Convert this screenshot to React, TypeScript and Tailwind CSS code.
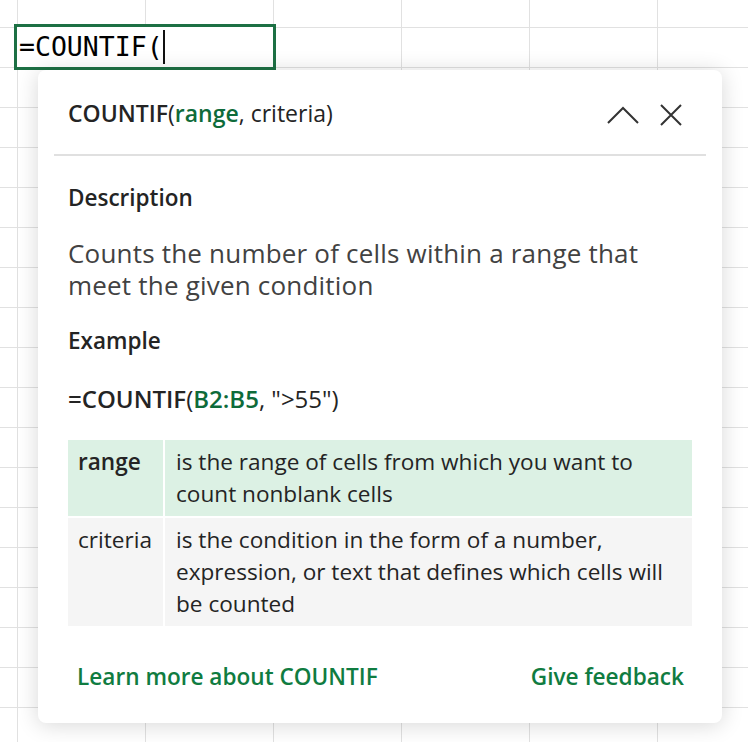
import React from 'react';

const FONT = "font-['Segoe_UI','Open_Sans','Noto_Sans',sans-serif]";

type Arg = { name: string; text: string[]; active?: boolean };

const args: Arg[] = [
  { name: 'range', text: ['is the range of cells from which you want to', 'count nonblank cells'], active: true },
  { name: 'criteria', text: ['is the condition in the form of a number,', 'expression, or text that defines which cells will', 'be counted'] },
];

function ChevronUp() {
  return (
    <svg width="32" height="18" viewBox="0 0 32 18" fill="none" stroke="#333" strokeWidth="2">
      <path d="M1 17L16 2l15 15" />
    </svg>
  );
}

function Close() {
  return (
    <svg width="22" height="22" viewBox="0 0 22 22" fill="none" stroke="#333" strokeWidth="2">
      <path d="M1 1l20 20M21 1L1 21" />
    </svg>
  );
}

function FunctionCard() {
  return (
    <div className={`absolute left-[38px] top-[70px] w-[684px] h-[653px] bg-white rounded-lg shadow-[0_2px_22px_rgba(0,0,0,0.16)] px-4 pt-[26px] ${FONT}`}>
      {/* Signature header */}
      <div className="flex items-center justify-between pl-[14px] pr-6 h-[38px]">
        <div className="text-[23px] text-[#242424] -mt-[3px]">
          <span className="font-semibold">COUNTIF</span>
          <span>(</span>
          <span className="font-semibold text-[#0e6b3a]">range</span>
          <span>, criteria)</span>
        </div>
        <div className="flex items-center gap-[21px]">
          <ChevronUp />
          <Close />
        </div>
      </div>
      <div className="mt-[20px] h-[2px] bg-[#e0e0e0]" />

      <div className="px-[14px]">
        <h3 className="mt-[29px] text-[22.5px] font-semibold text-[#242424] leading-[26px]">Description</h3>
        <div className="mt-[26px] text-[26px] tracking-[0.2px] leading-[32px] text-[#424242]">
          <p>Counts the number of cells within a range that</p>
          <p>meet the given condition</p>
        </div>
        <h3 className="mt-[27px] text-[22.5px] font-semibold text-[#242424] leading-[26px]">Example</h3>
        <div className="mt-[32px] text-[24px] leading-[26px] text-[#242424]">
          <span className="font-semibold">=COUNTIF</span>
          <span>(</span>
          <span className="font-semibold text-[#0e6b3a]">B2:B5</span>
          <span>, "&gt;55")</span>
        </div>

        {/* Argument table */}
        <div className="mt-[28px] flex flex-col gap-[2px]">
          {args.map((a) => (
            <div key={a.name} className={`flex text-[22.6px] leading-[32px] text-[#242424] ${a.active ? 'bg-[#dcf1e4]' : 'bg-[#f5f5f5]'}`}>
              <div className={`w-[95px] shrink-0 px-[10px] py-[6px] ${a.active ? 'font-semibold' : ''}`}>{a.name}</div>
              <div className="w-[2px] bg-white" />
              <div className="flex-1 px-[11px] py-[6px]">
                {a.text.map((t) => (
                  <div key={t}>{t}</div>
                ))}
              </div>
            </div>
          ))}
        </div>

        <div className="mt-[37px] flex justify-between pl-[9px] pr-[8px] text-[22.6px] font-semibold text-[#107c41] leading-[28px]">
          <a>Learn more about COUNTIF</a>
          <a>Give feedback</a>
        </div>
      </div>
    </div>
  );
}

export default function App() {
  return (
    <div className="relative w-[748px] h-[742px] overflow-hidden bg-white bg-[linear-gradient(to_right,#e1e1e1_1px,transparent_1px),linear-gradient(to_bottom,#e1e1e1_1px,transparent_1px)] bg-[size:128px_40px] bg-[position:17px_27px]">
      {/* Cell in edit mode */}
      <div className="absolute left-[14px] top-[24px] w-[262px] h-[46px] border-[3px] border-[#1d7044] bg-white flex items-center pl-[2px]">
        <span className="font-['DejaVu_Sans_Mono',monospace] text-[26.5px] text-black leading-none">=COUNTIF(</span>
        <span className="w-[2px] h-[34px] bg-[#111]" />
      </div>
      <FunctionCard />
    </div>
  );
}
